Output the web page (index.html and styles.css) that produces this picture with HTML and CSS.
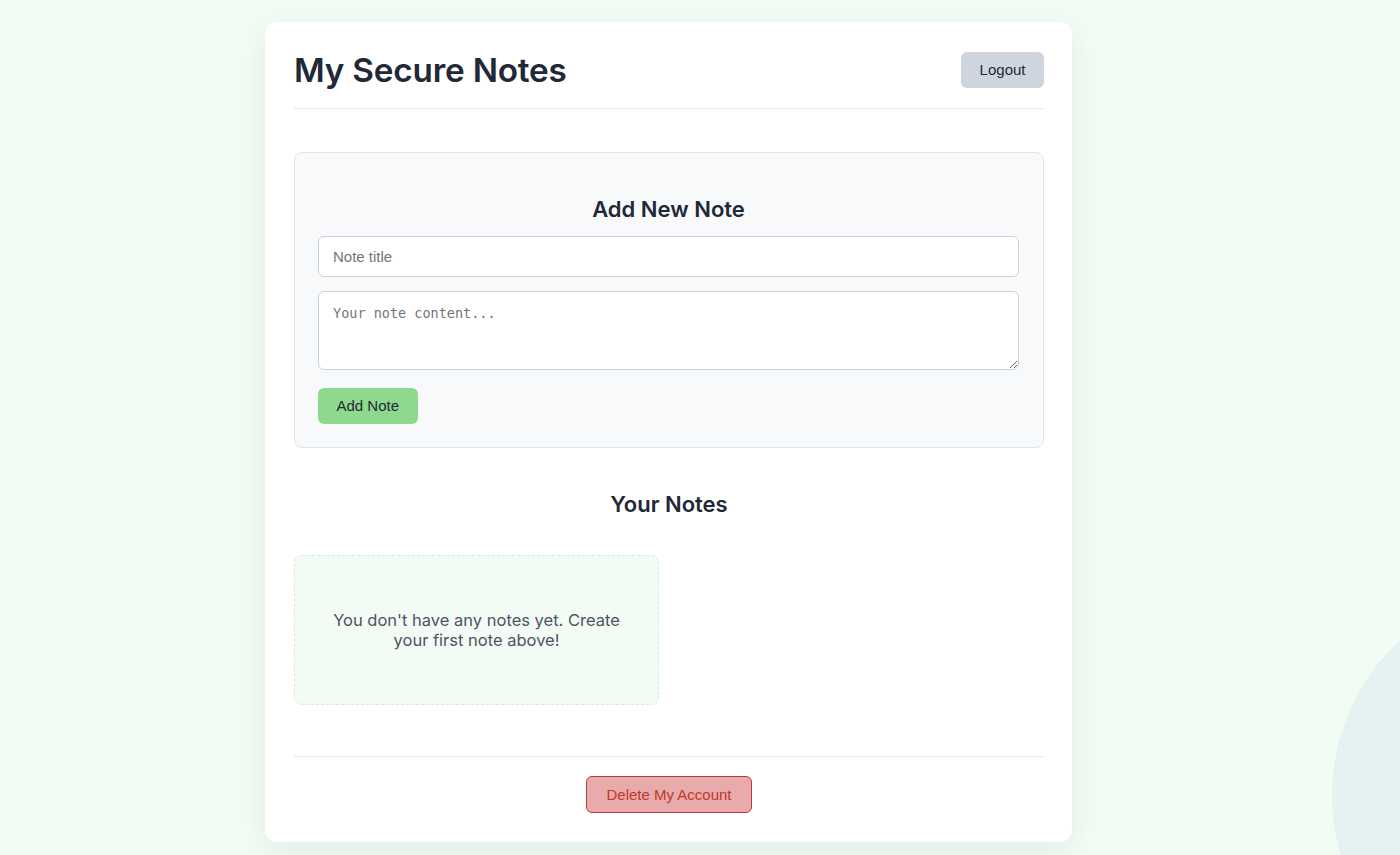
FILE: index.html
```html
<!DOCTYPE html>
<html lang="en">
<head>
<meta charset="utf-8">
<title>My Secure Notes</title>
<link rel="stylesheet" href="styles.css">
</head>
<body>
<div class="bg-circle"></div>
<main class="card">
  <header class="header">
    <h1 class="title">My Secure Notes</h1>
    <button class="btn btn-logout">Logout</button>
  </header>

  <section class="form-box">
    <h2 class="section-title form-title">Add New Note</h2>
    <input class="field" type="text" placeholder="Note title">
    <textarea class="field area" placeholder="Your note content..."></textarea>
    <div class="form-actions">
      <button class="btn btn-add">Add Note</button>
    </div>
  </section>

  <section class="notes">
    <h2 class="section-title notes-title">Your Notes</h2>
    <div class="notes-grid">
      <div class="empty">You don't have any notes yet. Create your first note above!</div>
    </div>
  </section>

  <footer class="footer">
    <button class="btn btn-delete">Delete My Account</button>
  </footer>
</main>
</body>
</html>
```

FILE: styles.css
```css
html, body {
  margin: 0;
  padding: 0;
}
body {
  background: #f1fcf4;
  font-family: Inter, "Noto Sans", sans-serif;
  min-height: 855px;
  overflow: hidden;
  position: relative;
  padding: 22px 63px 0 0;
  box-sizing: border-box;
}
.bg-circle {
  position: fixed;
  width: 420px;
  height: 420px;
  border-radius: 50%;
  background: #e6f2f2;
  left: 1332px;
  top: 585px;
  z-index: 0;
}
.card {
  position: relative;
  z-index: 1;
  width: 807px;
  box-sizing: border-box;
  margin: 0 auto;
  background: #ffffff;
  border-radius: 12px;
  box-shadow: 0 8px 30px rgba(40, 80, 50, 0.08);
  padding: 29px 28px 29px 29px;
}
.header {
  display: flex;
  align-items: center;
  justify-content: space-between;
  padding-bottom: 18px;
  border-bottom: 1px solid #e5e7eb;
}
.title {
  margin: 0;
  font-size: 33.3px;
  line-height: 39px;
  font-weight: 600;
  color: #1f2937;
  letter-spacing: -0.2px;
}
.btn {
  font-family: "Liberation Sans", Arial, sans-serif;
  font-size: 15px;
  line-height: 18px;
  border: none;
  border-radius: 6px;
  padding: 9px 18.5px;
  cursor: pointer;
}
.btn-logout {
  background: #cfd5de;
  color: #1f2937;
  margin-top: -1px;
}
.form-box {
  margin-top: 43px;
  background: #f8f9fb;
  border: 1px solid #e2e6eb;
  border-radius: 8px;
  padding: 24px 24px 23px 23px;
  display: flex;
  flex-direction: column;
}
.section-title {
  margin: 0;
  text-align: center;
  font-size: 22px;
  line-height: 27px;
  font-weight: 600;
  color: #1f2937;
}
.form-title {
  margin-top: 19px;
  margin-bottom: 13px;
}
.field {
  display: block;
  width: 100%;
  box-sizing: border-box;
  border: 1px solid #cbd2da;
  border-radius: 6px;
  background: #ffffff;
  font-family: "Liberation Sans", Arial, sans-serif;
  font-size: 15px;
  line-height: 17px;
  padding: 11px 14px;
  color: #1f2937;
  outline: none;
}
.field::placeholder {
  color: #757575;
}
.area {
  margin-top: 14px;
  height: 79px;
  font-family: "DejaVu Sans Mono", monospace;
  font-size: 13.5px;
  line-height: 16px;
  padding: 13px 14px;
  resize: vertical;
}
.form-actions {
  margin-top: 18px;
}
.btn-add {
  background: #8fd98f;
  color: #1f2937;
}
.notes {
  margin-top: 42px;
}
.notes-title {
  margin-bottom: 38px;
  position: relative;
  top: 1px;
}
.notes-grid {
  display: grid;
  grid-template-columns: repeat(auto-fill, minmax(300px, 1fr));
  gap: 20px;
}
.empty {
  background: #f2fcf5;
  border: 1px dashed #cfeedd;
  border-radius: 8px;
  padding: 54px 30px 54px;
  text-align: center;
  color: #4b5563;
  font-size: 16.5px;
  line-height: 20px;
}
.footer {
  margin-top: 51px;
  border-top: 1px solid #e5e7eb;
  padding-top: 19px;
  display: flex;
  justify-content: center;
}
.btn-delete {
  background: #e8aaaa;
  color: #c0392b;
  border: 1px solid #b83a3a;
  padding: 9px 19px;
  line-height: 17px;
}
```
